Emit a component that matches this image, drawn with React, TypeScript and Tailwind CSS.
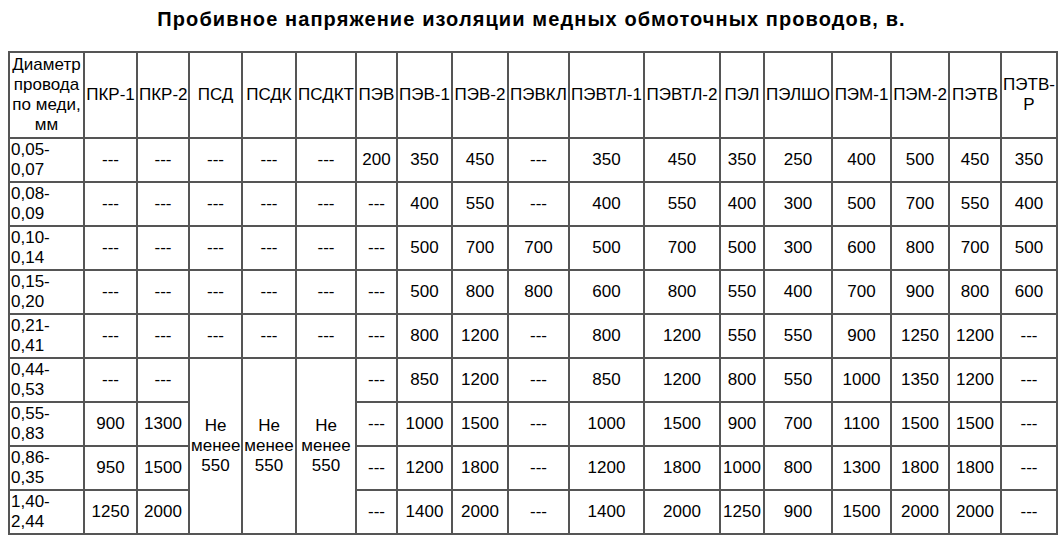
const widths = [75, 53, 52, 53, 54, 60, 41, 55, 56, 61, 75, 76, 44, 68, 59, 58, 52, 56]

const headers = [
  'ПКР-1',
  'ПКР-2',
  'ПСД',
  'ПСДК',
  'ПСДКТ',
  'ПЭВ',
  'ПЭВ-1',
  'ПЭВ-2',
  'ПЭВКЛ',
  'ПЭВТЛ-1',
  'ПЭВТЛ-2',
  'ПЭЛ',
  'ПЭЛШО',
  'ПЭМ-1',
  'ПЭМ-2',
  'ПЭТВ',
]

const D = '---'

// first five rows have all columns
const topRows: [string, string, string[]][] = [
  ['0,05-', '0,07', [D, D, D, D, D, '200', '350', '450', D, '350', '450', '350', '250', '400', '500', '450', '350']],
  ['0,08-', '0,09', [D, D, D, D, D, D, '400', '550', D, '400', '550', '400', '300', '500', '700', '550', '400']],
  ['0,10-', '0,14', [D, D, D, D, D, D, '500', '700', '700', '500', '700', '500', '300', '600', '800', '700', '500']],
  ['0,15-', '0,20', [D, D, D, D, D, D, '500', '800', '800', '600', '800', '550', '400', '700', '900', '800', '600']],
  ['0,21-', '0,41', [D, D, D, D, D, D, '800', '1200', D, '800', '1200', '550', '550', '900', '1250', '1200', D]],
]

// last four rows: ПКР-1, ПКР-2 then (ПСД, ПСДК, ПСДКТ merged) then the rest
const bottomRows: [string, string, string[], string[]][] = [
  ['0,44-', '0,53', [D, D], [D, '850', '1200', D, '850', '1200', '800', '550', '1000', '1350', '1200', D]],
  ['0,55-', '0,83', ['900', '1300'], [D, '1000', '1500', D, '1000', '1500', '900', '700', '1100', '1500', '1500', D]],
  ['0,86-', '0,35', ['950', '1500'], [D, '1200', '1800', D, '1200', '1800', '1000', '800', '1300', '1800', '1800', D]],
  ['1,40-', '2,44', ['1250', '2000'], [D, '1400', '2000', D, '1400', '2000', '1250', '900', '1500', '2000', '2000', D]],
]

const cell = 'border border-[#555] p-px text-center align-middle whitespace-nowrap'
const firstCell = 'border border-[#555] p-px text-left align-middle'

function Merged() {
  return (
    <td rowSpan={4} className="border border-[#555] p-px text-center align-middle">
      Не
      <br />
      менее
      <br />
      550
    </td>
  )
}

export default function App() {
  return (
    <div className="min-h-screen bg-white text-black" style={{ fontFamily: '"Liberation Sans", Arial, sans-serif' }}>
      <h1 className="pt-[8px] text-center text-[20px] font-bold leading-[23px] tracking-[1.1px]">
        Пробивное напряжение изоляции медных обмоточных проводов, в.
      </h1>

      <table className="ml-[8px] mt-[20px] w-[1050px] table-fixed border-separate border-spacing-0 border border-[#555] text-[17px] leading-[20px]">
        <thead>
          <tr className="h-[86px]">
            <th className="border border-[#555] p-px text-center align-middle font-normal" style={{ width: widths[0] }}>
              Диаметр
              <br />
              провода
              <br />
              по меди,
              <br />
              мм
            </th>
            {headers.map((h, i) => (
              <th key={h} className={cell + ' font-normal'} style={{ width: widths[i + 1] }}>
                {h}
              </th>
            ))}
            <th className="border border-[#555] p-px text-center align-middle font-normal" style={{ width: widths[17] }}>
              ПЭТВ-
              <br />Р
            </th>
          </tr>
        </thead>
        <tbody>
          {topRows.map(([a, b, vals]) => (
            <tr key={a} className="h-[44px]">
              <td className={firstCell}>
                {a}
                <br />
                {b}
              </td>
              {vals.map((v, i) => (
                <td key={i} className={cell}>
                  {v}
                </td>
              ))}
            </tr>
          ))}
          {bottomRows.map(([a, b, left, right], r) => (
            <tr key={a} className="h-[44px]">
              <td className={firstCell}>
                {a}
                <br />
                {b}
              </td>
              {left.map((v, i) => (
                <td key={'l' + i} className={cell}>
                  {v}
                </td>
              ))}
              {r === 0 && (
                <>
                  <Merged />
                  <Merged />
                  <Merged />
                </>
              )}
              {right.map((v, i) => (
                <td key={'r' + i} className={cell}>
                  {v}
                </td>
              ))}
            </tr>
          ))}
        </tbody>
      </table>
    </div>
  )
}
